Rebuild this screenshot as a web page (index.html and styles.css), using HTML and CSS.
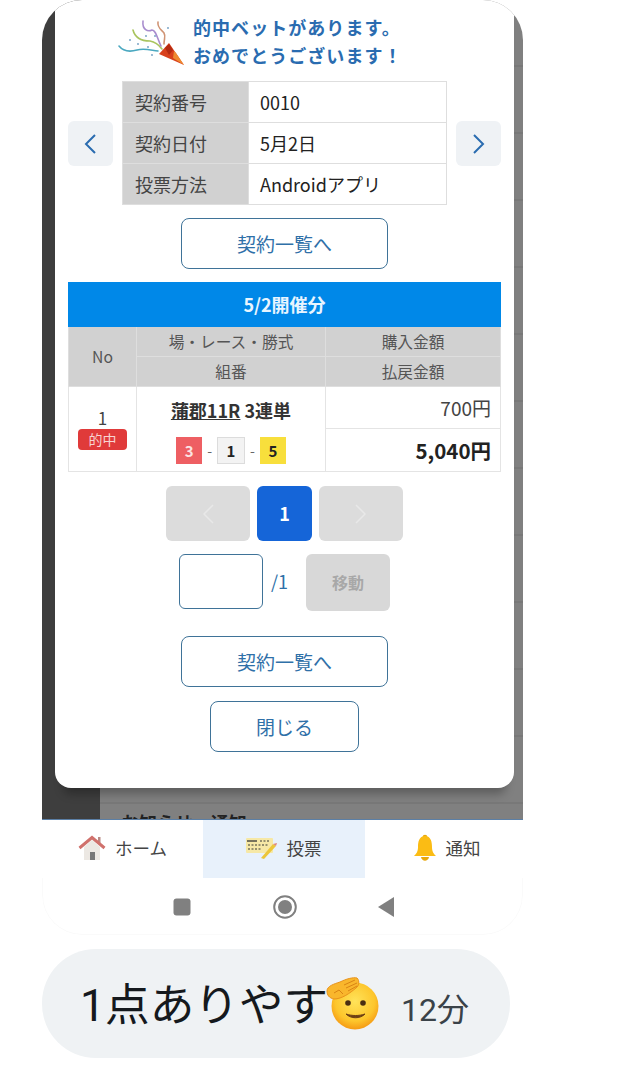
FILE: index.html
```html
<!DOCTYPE html>
<html lang="ja">
<head>
  <meta charset="UTF-8" />
  <meta name="viewport" content="width=device-width, initial-scale=1.0"/>
  <title>投票結果</title>
  <link rel="stylesheet" href="styles.css">
</head>

<body>
  <div class="screen">
    <!-- Dimmed page behind the dialog -->
    <div class="backdrop">
      <div class="side"></div>
      <div class="main">
        <p class="notice-title">お知らせ・通知</p>
      </div>

      <section class="modal">
        <div class="hit-head">
          <svg class="popper" viewBox="0 0 67 47" xmlns="http://www.w3.org/2000/svg">
            <g fill="none" stroke-width="1.6" stroke-linecap="round">
              <path d="M1,28 C5,33 12,34 19,32 C26,30 32,32 40,33" stroke="#4aa8c0"/>
              <path d="M15,12 C17,20 24,23 32,23 C38,24 41,27 44,31" stroke="#a9c45e"/>
              <path d="M25,3 C24,12 30,14 34,12 C38,12 39,20 43,28" stroke="#a88cce"/>
              <path d="M40,4 C39,10 44,12 46,15 C48,18 46,21 46,26" stroke="#d09474"/>
            </g>
            <g fill="#6f9cc0">
              <circle cx="12" cy="22" r="0.9"/>
              <circle cx="20" cy="26" r="0.9"/>
              <circle cx="30" cy="29" r="0.9"/>
              <circle cx="37" cy="18" r="0.9"/>
              <circle cx="28" cy="18" r="0.9"/>
              <circle cx="50" cy="10" r="0.9"/>
              <circle cx="34" cy="37" r="0.9"/>
            </g>
            <polygon points="41,36 51,25 66,47" fill="#d8401c"/>
            <polygon points="47,30 51,26 55,32 51,37" fill="#b42a12"/>
            <polygon points="56,33 58,35 66,47 55,40" fill="#ee8a30"/>
          </svg>
          <h2 class="hit-text">的中ベットがあります。<br>おめでとうございます！</h2>
        </div>

        <div class="info-row">
          <button class="side-btn">
            <svg viewBox="0 0 45 45" xmlns="http://www.w3.org/2000/svg"><path d="M27,14 L18,23 L27,32" fill="none" stroke="#2a6cb0" stroke-width="2"/></svg>
          </button>
          <table class="info-table">
            <tr><th>契約番号</th><td>0010</td></tr>
            <tr><th>契約日付</th><td>5月2日</td></tr>
            <tr><th>投票方法</th><td>Androidアプリ</td></tr>
          </table>
          <button class="side-btn">
            <svg viewBox="0 0 45 45" xmlns="http://www.w3.org/2000/svg"><path d="M18,14 L27,23 L18,32" fill="none" stroke="#2a6cb0" stroke-width="2"/></svg>
          </button>
        </div>

        <button class="outline-btn list-btn first">契約一覧へ</button>

        <div class="day-title">5/2開催分</div>
        <table class="bet-table">
          <colgroup>
            <col class="col-no">
            <col class="col-race">
            <col class="col-money">
          </colgroup>
          <tr class="head">
            <th rowspan="2">No</th>
            <th>場・レース・勝式</th>
            <th>購入金額</th>
          </tr>
          <tr class="head">
            <th>組番</th>
            <th>払戻金額</th>
          </tr>
          <tr class="row-a">
            <td rowspan="2" class="no-cell">1<span class="hit-badge">的中</span></td>
            <td rowspan="2" class="race-cell">
              <div class="race-name"><u>蒲郡11R</u> 3連単</div>
              <div class="combo">
                <span class="lane red">3</span>-<span class="lane white">1</span>-<span class="lane yellow">5</span>
              </div>
            </td>
            <td class="money">700円</td>
          </tr>
          <tr class="row-b">
            <td class="money payout">5,040円</td>
          </tr>
        </table>

        <div class="pager">
          <button class="page-btn off">
            <svg viewBox="0 0 84 55" xmlns="http://www.w3.org/2000/svg"><path d="M47,19 L38,28 L47,37" fill="none" stroke="#e8e8e8" stroke-width="1.5"/></svg>
          </button>
          <button class="page-btn now">1</button>
          <button class="page-btn off">
            <svg viewBox="0 0 84 55" xmlns="http://www.w3.org/2000/svg"><path d="M37,19 L46,28 L37,37" fill="none" stroke="#e8e8e8" stroke-width="1.5"/></svg>
          </button>
        </div>

        <div class="jump">
          <input class="jump-input" type="text">
          <span class="jump-total">/1</span>
          <button class="jump-btn">移動</button>
        </div>

        <button class="outline-btn list-btn second">契約一覧へ</button>
        <button class="outline-btn close-btn">閉じる</button>
      </section>
    </div>

    <!-- Bottom tabs -->
    <nav class="tabs">
      <div class="tab">
        <svg class="tab-icon" width="28" height="26" viewBox="0 0 28 26" xmlns="http://www.w3.org/2000/svg">
          <polygon points="6,12 14,5 22,12 22,25 6,25" fill="#ece8e3"/>
          <rect x="12" y="17" width="5" height="8" fill="#777"/>
          <rect x="20" y="2" width="2.5" height="6" fill="#b98a84"/>
          <path d="M1.5,13 L14,2.5 L26.5,13" fill="none" stroke="#d0716c" stroke-width="3"/>
        </svg>
        ホーム
      </div>
      <div class="tab active">
        <svg class="tab-icon" width="32" height="24" viewBox="0 0 32 24" xmlns="http://www.w3.org/2000/svg">
          <rect x="1" y="2" width="27" height="15" rx="1" fill="#f6e8a6"/>
          <rect x="2" y="4" width="10" height="2" fill="#77735c"/>
          <path d="M15,5 h9 M3,9 h20 M3,13 h14" stroke="#77735c" stroke-width="1.3" stroke-dasharray="2 1.5"/>
          <path d="M16,22 L28,8 L31,10 L19,23 Z" fill="#ecc63a"/>
          <path d="M28,8 L31,10 L32,7 Z" fill="#e0857a"/>
        </svg>
        投票
      </div>
      <div class="tab last">
        <svg class="tab-icon" width="24" height="28" viewBox="0 0 24 28" xmlns="http://www.w3.org/2000/svg">
          <circle cx="12" cy="3" r="2.3" fill="#e8a80c"/>
          <path d="M12,2 C6,2 5,8 5,13 C5,18 3,20 1,22 L23,22 C21,20 19,18 19,13 C19,8 18,2 12,2 Z" fill="#fbbc14"/>
          <path d="M8,23 C9,28 15,28 16,23 Z" fill="#e8a80c"/>
        </svg>
        通知
      </div>
    </nav>

    <!-- Android system buttons -->
    <div class="sysnav">
      <svg width="18" height="18" viewBox="0 0 18 18" xmlns="http://www.w3.org/2000/svg"><rect x="0.5" y="0.5" width="17" height="17" rx="3" fill="#808080"/></svg>
      <svg width="26" height="26" viewBox="0 0 26 26" xmlns="http://www.w3.org/2000/svg">
        <circle cx="13" cy="13" r="10.8" fill="none" stroke="#808080" stroke-width="2"/>
        <circle cx="13" cy="13" r="7" fill="#808080"/>
      </svg>
      <svg class="sys-back" width="18" height="22" viewBox="0 0 18 22" xmlns="http://www.w3.org/2000/svg"><polygon points="17,1 17,21 1,11" fill="#808080"/></svg>
    </div>
  </div>

  <!-- Chat reply bubble -->
  <div class="bubble">
    <span class="bubble-text">1点ありやす</span>
    <svg class="salute" width="54" height="54" viewBox="0 0 54 54" xmlns="http://www.w3.org/2000/svg">
      <defs>
        <radialGradient id="faceGrad" cx="50%" cy="40%" r="60%">
          <stop offset="0%" stop-color="#ffe35a"/>
          <stop offset="70%" stop-color="#fdc62c"/>
          <stop offset="100%" stop-color="#f59a14"/>
        </radialGradient>
      </defs>
      <circle cx="29" cy="29" r="23.5" fill="url(#faceGrad)"/>
      <circle cx="22" cy="26" r="2.8" fill="#4a2e12"/>
      <circle cx="37" cy="26" r="2.8" fill="#4a2e12"/>
      <path d="M20,37 C25,42 34,42 39,37 C33,39 26,39 20,37 Z" fill="#6d3f14" stroke="#6d3f14" stroke-linejoin="round"/>
      <path d="M1,14 C1,9 8,7 14,5 C20,2 27,0 31,1 C34,4 33,9 30,11 C24,16 16,22 8,22 C3,21 1,18 1,14 Z" fill="#f9b62c" stroke="#e8921a" stroke-width="1"/>
      <path d="M8,16 L13,13 L17,17 M18,8 L29,3 M20,11 L31,6 M22,14 L31,9" fill="none" stroke="#d98414" stroke-width="1"/>
    </svg>
    <span class="bubble-time">12分</span>
  </div>
</body>
</html>
```

FILE: styles.css
```css
* {
  margin: 0;
  padding: 0;
  box-sizing: border-box;
}
body {
  font-family: "Noto Sans CJK JP", "Noto Sans", sans-serif;
  background: #fff;
  color: #222;
  overflow: hidden;
}
button, input {
  font-family: inherit;
}

/* Phone screen */
.screen {
  width: 481px;
  height: 935px;
  margin-left: 42px;
  border-radius: 40px;
  overflow: hidden;
}
.backdrop {
  position: relative;
  display: flex;
  height: 820px;
  border-bottom: 1px solid #5b7fa6;
}
.side {
  width: 58px;
  background: #3e3e3e;
}
.main {
  flex: 1;
  display: flex;
  flex-direction: column;
  justify-content: flex-end;
  padding-left: 21px;
  overflow: hidden;
  background: repeating-linear-gradient(#808080 0, #808080 65px, #787878 65px, #787878 67px);
}
.notice-title {
  margin-bottom: -15px;
  font-size: 18px;
  line-height: 24px;
  font-weight: 700;
  color: #222;
}

/* Dialog */
.modal {
  position: absolute;
  left: 13px;
  top: 0;
  width: 459px;
  height: 788px;
  padding: 13px 13px 0;
  background: #fff;
  border-radius: 0 0 16px 16px;
  box-shadow: 0 14px 10px -8px rgba(0, 0, 0, 0.28);
}
.hit-head {
  display: flex;
  align-items: center;
  gap: 8px;
  margin-left: 50px;
}
.popper {
  width: 67px;
  height: 47px;
  flex: none;
}
.hit-text {
  font-size: 18px;
  line-height: 28px;
  font-weight: 700;
  letter-spacing: 1.05px;
  color: #2a6cb0;
}
.info-row {
  display: flex;
  align-items: center;
  justify-content: space-between;
  margin-top: 12px;
}
.side-btn {
  width: 45px;
  height: 45px;
  border: none;
  border-radius: 6px;
  background: #eff2f5;
}
.side-btn svg {
  display: block;
}
.info-table {
  width: 325px;
  border-collapse: collapse;
  table-layout: fixed;
  font-size: 18px;
}
.info-table th, .info-table td {
  height: 41px;
  padding: 0 12px;
  text-align: left;
  font-weight: 400;
  border: 1px solid #dedede;
}
.info-table th {
  width: 126px;
  background: #d1d1d1;
  color: #444;
}
.info-table td {
  padding-left: 11px;
  color: #222;
}

.outline-btn {
  display: block;
  height: 51px;
  margin: 0 auto;
  background: #fff;
  border: 1.5px solid #3f7398;
  border-radius: 8px;
  font-size: 19px;
  color: #2f70a8;
}
.list-btn {
  width: 207px;
}
.list-btn.first {
  margin-top: 13px;
}
.list-btn.second {
  margin-top: 25px;
}
.close-btn {
  width: 149px;
  margin-top: 14px;
}

/* Bets */
.day-title {
  height: 45px;
  margin-top: 13px;
  background: #0088e8;
  color: #e8f5ff;
  font-size: 18px;
  font-weight: 700;
  line-height: 45px;
  text-align: center;
}
.bet-table {
  width: 433px;
  border-collapse: collapse;
  table-layout: fixed;
}
.col-no {
  width: 68px;
}
.col-race {
  width: 189px;
}
.head th {
  height: 29.5px;
  background: #d1d1d1;
  border: 1px solid #dedede;
  border-top-width: 0;
  font-size: 15.7px;
  font-weight: 400;
  color: #555;
}
.bet-table td {
  border: 1px solid #e4e4e4;
}
.row-a td {
  height: 42px;
}
.row-b td {
  height: 43px;
}
.no-cell {
  text-align: center;
  font-size: 17px;
  line-height: 22px;
  color: #444;
}
.hit-badge {
  display: block;
  width: 49px;
  height: 21px;
  margin: 0 auto;
  background: #e03a3a;
  border-radius: 4px;
  color: #f8d2d2;
  font-size: 14px;
  line-height: 20px;
}
.race-cell {
  padding-top: 4px;
  text-align: center;
}
.race-name {
  font-size: 18px;
  line-height: 24px;
  font-weight: 700;
  color: #333;
}
.combo {
  display: flex;
  justify-content: center;
  align-items: center;
  gap: 5px;
  margin-top: 15px;
  font-size: 14px;
  color: #666;
}
.lane {
  width: 26px;
  height: 27px;
  font-size: 15px;
  font-weight: 700;
  line-height: 27px;
  text-align: center;
}
.lane.red {
  background: #ee5f63;
  color: #fbe4e4;
}
.lane.white {
  width: 28px;
  background: #f3f3f3;
  border: 1px solid #dcdcdc;
  line-height: 25px;
  color: #222;
}
.lane.yellow {
  background: #f8df3c;
  color: #222;
}
.money {
  padding-right: 9px;
  text-align: right;
  font-size: 19px;
  color: #444;
}
.money.payout {
  font-size: 20.5px;
  font-weight: 700;
  color: #222;
}

/* Pager */
.pager {
  display: flex;
  justify-content: center;
  gap: 7px;
  margin-top: 14px;
}
.page-btn {
  width: 84px;
  height: 55px;
  border: none;
  border-radius: 6px;
  background: #dcdcdc;
}
.page-btn svg {
  display: block;
}
.page-btn.now {
  width: 55px;
  background: #1565d8;
  color: #fff;
  font-size: 18px;
  font-weight: 700;
}
.jump {
  display: flex;
  justify-content: center;
  align-items: flex-start;
  margin-top: 13px;
}
.jump-input {
  width: 84px;
  height: 55px;
  border: 1.5px solid #3f7398;
  border-radius: 6px;
}
.jump-total {
  width: 43px;
  padding-left: 8px;
  font-size: 18px;
  line-height: 55px;
  color: #2f70a8;
}
.jump-btn {
  width: 84px;
  height: 57px;
  border: none;
  border-radius: 6px;
  background: #d8d8d8;
  color: #a8a8a8;
  font-size: 16px;
  font-weight: 700;
}

/* Tabs */
.tabs {
  display: grid;
  grid-template-columns: 161px 162px 158px;
  height: 58px;
  background: #fff;
}
.tab {
  display: flex;
  justify-content: center;
  align-items: center;
  gap: 9px;
  padding-bottom: 3px;
  font-size: 17.5px;
  color: #444;
}
.tab.active {
  padding-right: 2px;
  background: #e8f1fb;
  gap: 10px;
}
.tab.last {
  padding-left: 5px;
}
.tab-icon {
  flex: none;
}

/* System nav */
.sysnav {
  display: flex;
  align-items: center;
  gap: 81px;
  height: 57px;
  padding: 2px 0 0 130px;
  border: 1px solid #fafafa;
  border-top: none;
  border-radius: 0 0 40px 40px;
}
.sys-back {
  margin-left: -2px;
}

/* Chat bubble */
.bubble {
  display: flex;
  align-items: center;
  width: 468px;
  height: 109px;
  margin: 14px 0 0 42px;
  padding: 0 0 5px 38px;
  background: #eff2f4;
  border-radius: 54px;
}
.bubble-text {
  font-family: Roboto, "Noto Sans CJK JP", sans-serif;
  font-size: 44.6px;
  color: #15191d;
}
.salute {
  flex: none;
  margin: 5px 0 0 -2px;
}
.bubble-time {
  margin: 11px 0 0 21px;
  font-family: Roboto, "Noto Sans CJK JP", sans-serif;
  font-size: 32px;
  color: #3a4248;
}
```
